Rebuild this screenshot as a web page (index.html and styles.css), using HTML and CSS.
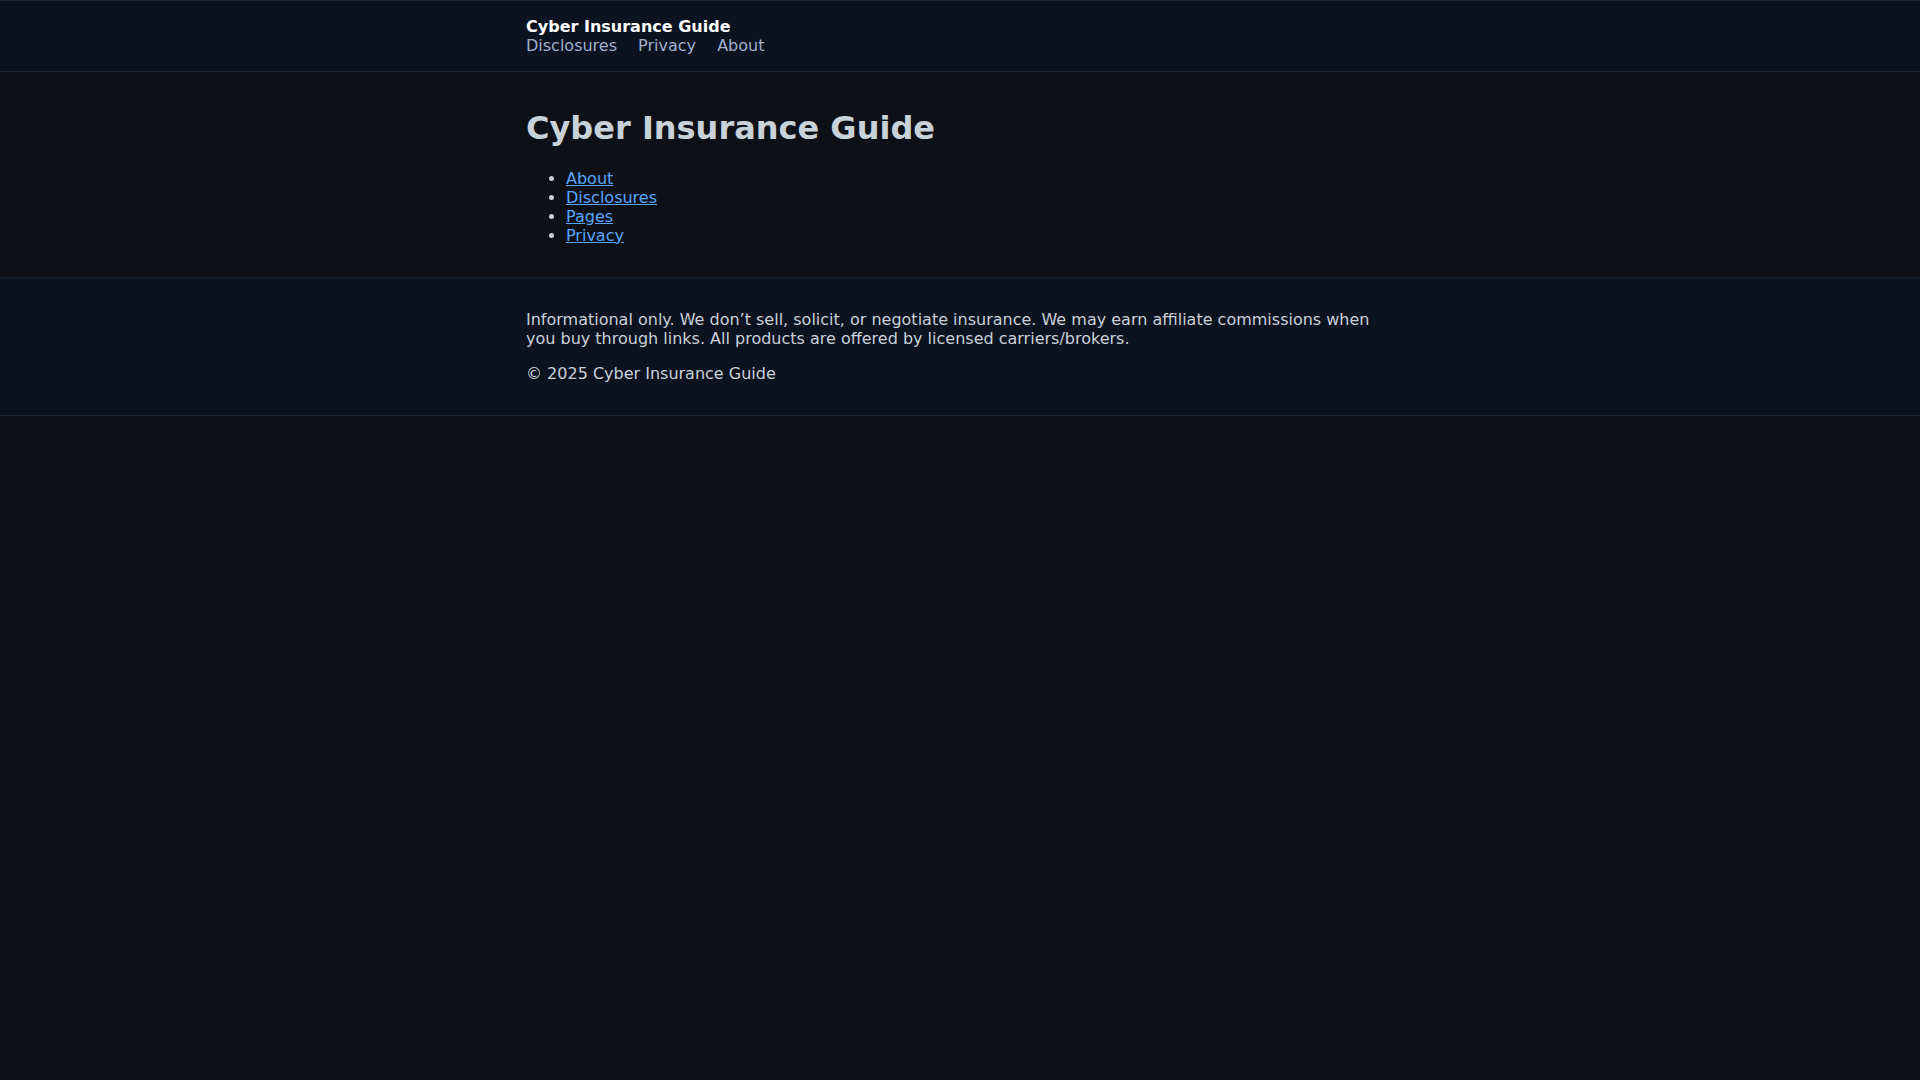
FILE: index.html
```html
<!DOCTYPE html>
<html lang="en">
<head>
<meta charset="utf-8">
<title>Cyber Insurance Guide</title>
<link rel="stylesheet" href="styles.css">
</head>
<body>
<header class="site-header">
  <div class="container">
    <div class="brand">Cyber Insurance Guide</div>
    <nav class="nav">
      <a href="#">Disclosures</a>
      <a href="#">Privacy</a>
      <a href="#">About</a>
    </nav>
  </div>
</header>
<main class="main">
  <div class="container">
    <h1 class="title">Cyber Insurance Guide</h1>
    <ul class="links">
      <li><a href="#">About</a></li>
      <li><a href="#">Disclosures</a></li>
      <li><a href="#">Pages</a></li>
      <li><a href="#">Privacy</a></li>
    </ul>
  </div>
</main>
<footer class="site-footer">
  <div class="container">
    <p>Informational only. We don’t sell, solicit, or negotiate insurance. We may earn affiliate commissions when you buy through links. All products are offered by licensed carriers/brokers.</p>
    <p>© 2025 Cyber Insurance Guide</p>
  </div>
</footer>
</body>
</html>
```
FILE: styles.css
```css
html, body {
  margin: 0;
  padding: 0;
  background: #0d1117;
  color: #c9d1d9;
  font-family: "DejaVu Sans", sans-serif;
  font-size: 16px;
}
.container {
  max-width: 900px;
  margin: 0 auto;
  padding: 0 16px;
  box-sizing: border-box;
}
.site-header {
  background: #0b1220;
  border-top: 1px solid #1e232b;
  border-bottom: 1px solid #1e232b;
  padding: 16px 0;
}
.brand {
  font-weight: bold;
  color: #ffffff;
}
.nav a {
  color: #9fb0cc;
  text-decoration: none;
  margin-right: 16px;
}
.main {
  padding: 16px 0;
}
.title {
  font-size: 32px;
  margin: 21.44px 0;
  color: #c9d1d9;
}
.links {
  margin: 16px 0;
  padding-left: 40px;
}
.links a {
  color: #58a6ff;
}
.site-footer {
  background: #0b1220;
  border-top: 1px solid #1e232b;
  border-bottom: 1px solid #1e232b;
  padding: 16px 0;
}
.site-footer p {
  margin: 16px 0;
}
```
